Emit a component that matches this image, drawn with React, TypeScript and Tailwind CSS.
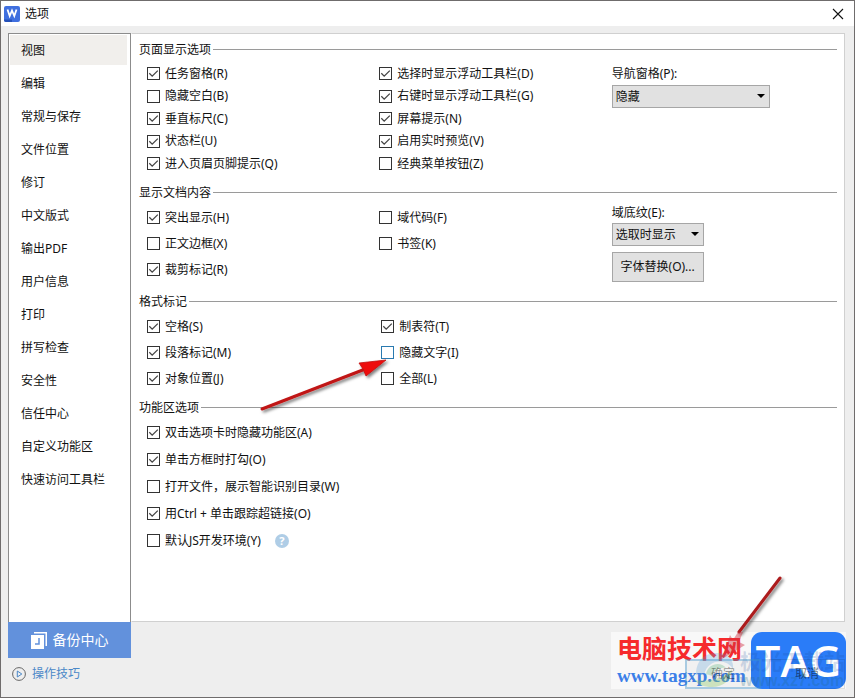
import { useState } from 'react';
import { clsx } from 'clsx';

interface Option {
  label: string;
  checked?: boolean;
  highlighted?: boolean;
  help?: boolean;
}

const NAV_ITEMS = [
  '视图',
  '编辑',
  '常规与保存',
  '文件位置',
  '修订',
  '中文版式',
  '输出PDF',
  '用户信息',
  '打印',
  '拼写检查',
  '安全性',
  '信任中心',
  '自定义功能区',
  '快速访问工具栏',
];

const PAGE_LEFT: Option[] = [
  { label: '任务窗格(R)', checked: true },
  { label: '隐藏空白(B)' },
  { label: '垂直标尺(C)', checked: true },
  { label: '状态栏(U)', checked: true },
  { label: '进入页眉页脚提示(Q)', checked: true },
];

const PAGE_RIGHT: Option[] = [
  { label: '选择时显示浮动工具栏(D)', checked: true },
  { label: '右键时显示浮动工具栏(G)', checked: true },
  { label: '屏幕提示(N)', checked: true },
  { label: '启用实时预览(V)', checked: true },
  { label: '经典菜单按钮(Z)' },
];

const CONTENT_LEFT: Option[] = [
  { label: '突出显示(H)', checked: true },
  { label: '正文边框(X)' },
  { label: '裁剪标记(R)', checked: true },
];

const CONTENT_RIGHT: Option[] = [{ label: '域代码(F)' }, { label: '书签(K)' }];

const MARKS_LEFT: Option[] = [
  { label: '空格(S)', checked: true },
  { label: '段落标记(M)', checked: true },
  { label: '对象位置(J)', checked: true },
];

const MARKS_RIGHT: Option[] = [
  { label: '制表符(T)', checked: true },
  { label: '隐藏文字(I)', highlighted: true },
  { label: '全部(L)' },
];

const FEATURES: Option[] = [
  { label: '双击选项卡时隐藏功能区(A)', checked: true },
  { label: '单击方框时打勾(O)', checked: true },
  { label: '打开文件，展示智能识别目录(W)' },
  { label: '用Ctrl + 单击跟踪超链接(O)', checked: true },
  { label: '默认JS开发环境(Y)', help: true },
];

function CheckOption({ option }: { option: Option }) {
  return (
    <div className="flex h-[21px] items-center">
      <label className="flex items-center gap-1 whitespace-nowrap">
        <span className="relative h-[13px] w-[14px] shrink-0">
          <input
            type="checkbox"
            defaultChecked={option.checked}
            className={clsx(
              'peer block size-[13px] appearance-none border bg-white',
              option.highlighted ? 'border-[#2a7ab0]' : 'border-[#333333]'
            )}
          />
          <svg
            viewBox="0 0 13 13"
            className="pointer-events-none absolute top-0 left-0 hidden size-[13px] peer-checked:block"
            fill="none"
            stroke="#444"
            strokeWidth="1.3"
          >
            <path d="M2.3 6.3 5.2 9.2 10.8 3.6" />
          </svg>
        </span>
        {option.label}
      </label>
      {option.help && (
        <button
          type="button"
          aria-label="帮助"
          className="ml-[14px] flex size-[14px] items-center justify-center rounded-full bg-[#afcde6] text-[11px] leading-none font-bold text-white"
        >
          ?
        </button>
      )}
    </div>
  );
}

function OptionList({ options, className }: { options: Option[]; className: string }) {
  return (
    <div className={clsx('flex flex-col', className)}>
      {options.map((option) => (
        <CheckOption key={option.label} option={option} />
      ))}
    </div>
  );
}

function SectionTitle({ children }: { children: string }) {
  return (
    <h2 className="flex h-[19px] items-center gap-0.5 px-[7px] whitespace-nowrap">
      {children}
      <span className="h-px flex-1 bg-[#9a9a9a]" />
    </h2>
  );
}

function SelectBox({ id, options, className }: { id: string; options: string[]; className: string }) {
  return (
    <span className={clsx('relative block', className)}>
      <select
        id={id}
        className="h-[23px] w-full appearance-none border border-[#a6a6a6] bg-[#e1e1e1] pr-5 pl-[3px]"
      >
        {options.map((o) => (
          <option key={o}>{o}</option>
        ))}
      </select>
      <svg viewBox="0 0 8 4" className="pointer-events-none absolute top-[9px] right-[5px] h-1 w-2">
        <path d="M0 0h8L4 4z" fill="#000" />
      </svg>
    </span>
  );
}

// Red pointers laid over the dialog
function Arrows() {
  return (
    <svg
      viewBox="0 0 855 698"
      className="pointer-events-none absolute -top-px -left-px h-[698px] w-[855px]"
      aria-hidden="true"
    >
      <defs>
        <filter id="shadow" x="-20%" y="-20%" width="140%" height="140%">
          <feDropShadow dx="2" dy="2" stdDeviation="1.5" floodColor="#000" floodOpacity="0.5" />
        </filter>
      </defs>
      <g filter="url(#shadow)">
        <path d="M262 409 364 369.500" stroke="#c01414" strokeWidth="3" strokeLinecap="round" />
        <path d="M386 360 359 363 363 369 366 376Z" fill="#ee0a0a" stroke="#c01414" strokeWidth="0.8" />
      </g>
      <g filter="url(#shadow)">
        <path d="M780 578 739 632" stroke="#ac1a1e" strokeWidth="3" strokeLinecap="round" />
      </g>
      <path d="M730 635 733 640 738 632 743 632 739 642 745 645 722 659Z" fill="#d03040" fillOpacity="0.45" />
    </svg>
  );
}

function SiteBadge() {
  return (
    <div className="pointer-events-none absolute -right-px bottom-2 flex h-[57px] w-[235px] justify-between bg-white/60">
      <div className="flex flex-col pl-[6px] whitespace-nowrap">
        <span className="h-8 text-[25px] leading-8 font-bold text-[#f62a2c]">电脑技术网</span>
        <span className="font-['Liberation_Serif',serif] text-[19px] leading-6 font-bold text-[#3b7fe8]">
          www.tagxp.com
        </span>
      </div>
      <span className="flex h-[57px] w-[95px] shrink-0 items-center justify-center rounded-[11px] bg-[#2a7cf8] font-['Open_Sans',sans-serif] text-[44px] leading-[57px] font-semibold text-white">
        TAG
      </span>
    </div>
  );
}

// Faint download site mark printed across the footer buttons
function DownloadMark() {
  return (
    <div
      className="pointer-events-none absolute right-0 bottom-2 flex items-center gap-1 whitespace-nowrap"
      aria-hidden="true"
    >
      <svg viewBox="0 0 42 40" className="h-10 w-[42px]" fill="none">
        <path d="M2 26C2 8 14 3 26 4c9 1 14 8 13 16C34 10 14 8 10 26z" fill="#5aa0e0" fillOpacity="0.28" />
        <path d="M12 25c2-11 15-13 20-6-6-1-12 2-14 8z" fill="#6ac08a" fillOpacity="0.35" />
        <path d="M1 31c12 2 30-1 37-11 0 11-9 18-20 18C10 38 4 36 1 31z" fill="#8acb5c" fillOpacity="0.35" />
      </svg>
      <span className="flex flex-col">
        <span className="text-[21px] leading-6 font-bold text-[#1c4c9c]/20">极光下载站</span>
        <span className="font-['Liberation_Sans',sans-serif] text-[16px] leading-4 font-bold text-[#1f6880]/25">
          www.xz7.com
        </span>
      </span>
    </div>
  );
}

export default function App() {
  const [active, setActive] = useState(NAV_ITEMS[0]);

  return (
    <div className="relative flex h-screen min-h-[640px] flex-col overflow-hidden border border-[#6f6c6c] bg-[#eeeeee] font-['Noto_Sans','Noto_Sans_CJK_SC',sans-serif] text-[12px] leading-[18px] text-[#111111]">
      {/* Title bar */}
      <header className="flex h-[25px] shrink-0 items-center bg-white pr-2 pl-[3px]">
        <svg viewBox="0 0 16 16" className="size-4">
          <rect width="16" height="16" rx="2" fill="#3f6fdf" />
          <path d="M0 13.500h8V16H2a2 2 0 0 1-2-2z" fill="#2450b8" />
          <path d="M3.500 3.500 5.700 10 8 4.500l2.300 5.500L12.500 3.500" fill="none" stroke="#fff" strokeWidth="1.800" />
        </svg>
        <h1 className="ml-[5px] flex-1">选项</h1>
        <button type="button" aria-label="关闭" className="flex size-4 items-center justify-center">
          <svg viewBox="0 0 12 12" className="size-3" fill="none" stroke="#111" strokeWidth="1.100">
            <path d="M1 1 11 11M11 1 1 11" />
          </svg>
        </button>
      </header>

      <div className="flex min-h-0 flex-1 pt-[7px] pr-[9px] pl-[7px]">
        {/* Sidebar */}
        <aside className="flex w-[123px] shrink-0 flex-col">
          <nav className="flex flex-1 flex-col border border-b-0 border-[#8c8c8c] bg-white pt-px pr-[3px] pl-px">
            {NAV_ITEMS.map((item) => (
              <button
                key={item}
                type="button"
                onClick={() => setActive(item)}
                className={clsx(
                  'mb-[3px] h-[30px] pt-0.5 pl-[11px] text-left whitespace-nowrap',
                  active === item && 'bg-[#f1efec]'
                )}
              >
                {item}
              </button>
            ))}
          </nav>
          <button
            type="button"
            className="flex h-9 shrink-0 items-center justify-center gap-[6px] bg-[#6291dc] text-[14px] text-white"
          >
            <svg viewBox="0 0 16 17" className="h-[17px] w-4">
              <path d="M3 0h13v14h-1.500V1.500H3z" fill="#fff" />
              <path d="M0 3h13v14H0z" fill="#fff" />
              <path d="M8 6v6H4" fill="none" stroke="#6291dc" strokeWidth="1.500" />
            </svg>
            备份中心
          </button>
          <a href="#tips" className="flex h-[39px] shrink-0 items-center gap-[6px] pb-[7px] pl-1 text-[#4a88c8]">
            <svg viewBox="0 0 14 14" className="size-[14px]" fill="none">
              <circle cx="7" cy="7" r="6.400" stroke="#666" />
              <path d="M5.300 4 9.800 7 5.300 10z" stroke="#4a88c8" />
            </svg>
            操作技巧
          </a>
        </aside>

        <div className="flex min-w-0 flex-1 flex-col">
          <main className="flex-1 border border-[#d0d0d0] border-l-transparent bg-white pt-[6px]">
            <section>
              <SectionTitle>页面显示选项</SectionTitle>
              <div className="mt-1 grid grid-cols-3 pl-[15px]">
                <OptionList options={PAGE_LEFT} className="h-[111px] justify-between" />
                <OptionList options={PAGE_RIGHT} className="h-[111px] justify-between" />
                <div>
                  <label htmlFor="nav-pane" className="block h-[22px] leading-[21px]">
                    导航窗格(P):
                  </label>
                  <SelectBox id="nav-pane" options={['隐藏', '靠左', '靠右']} className="w-[158px]" />
                </div>
              </div>
            </section>

            <section className="mt-[9px]">
              <SectionTitle>显示文档内容</SectionTitle>
              <div className="mt-[5px] grid grid-cols-3 pl-[15px]">
                <OptionList options={CONTENT_LEFT} className="gap-[5px]" />
                <OptionList options={CONTENT_RIGHT} className="gap-[5px]" />
                <div className="h-[73px]">
                  <label htmlFor="shading" className="block h-4 leading-3">
                    域底纹(E):
                  </label>
                  <SelectBox id="shading" options={['选取时显示', '不显示', '总是显示']} className="w-[92px]" />
                  <button
                    type="button"
                    className="mt-[6px] block h-[30px] w-[92px] border border-[#a6a6a6] bg-[#e1e1e1]"
                  >
                    字体替换(O)...
                  </button>
                </div>
              </div>
            </section>

            <section className="mt-3">
              <SectionTitle>格式标记</SectionTitle>
              <div className="mt-[5px] grid grid-cols-3 pl-[15px]">
                <OptionList options={MARKS_LEFT} className="gap-[5px]" />
                <OptionList options={MARKS_RIGHT} className="gap-[5px] pl-[2px]" />
              </div>
            </section>

            <section className="mt-[9px]">
              <SectionTitle>功能区选项</SectionTitle>
              <OptionList options={FEATURES} className="mt-[5px] gap-[6px] pl-[15px]" />
            </section>
          </main>

          <footer className="relative flex h-[75px] shrink-0 items-end justify-end gap-2 pb-2">
            <SiteBadge />
            <DownloadMark />
            <button
              type="button"
              className="relative h-[30px] w-[76px] border-2 border-[#3f93cc]/40 bg-[#777777]/5 text-black/40"
            >
              确定
            </button>
            <button type="button" className="relative h-[30px] w-[76px] border border-black/10 text-black/50">
              取消
            </button>
          </footer>
        </div>
      </div>
      <Arrows />
    </div>
  );
}
